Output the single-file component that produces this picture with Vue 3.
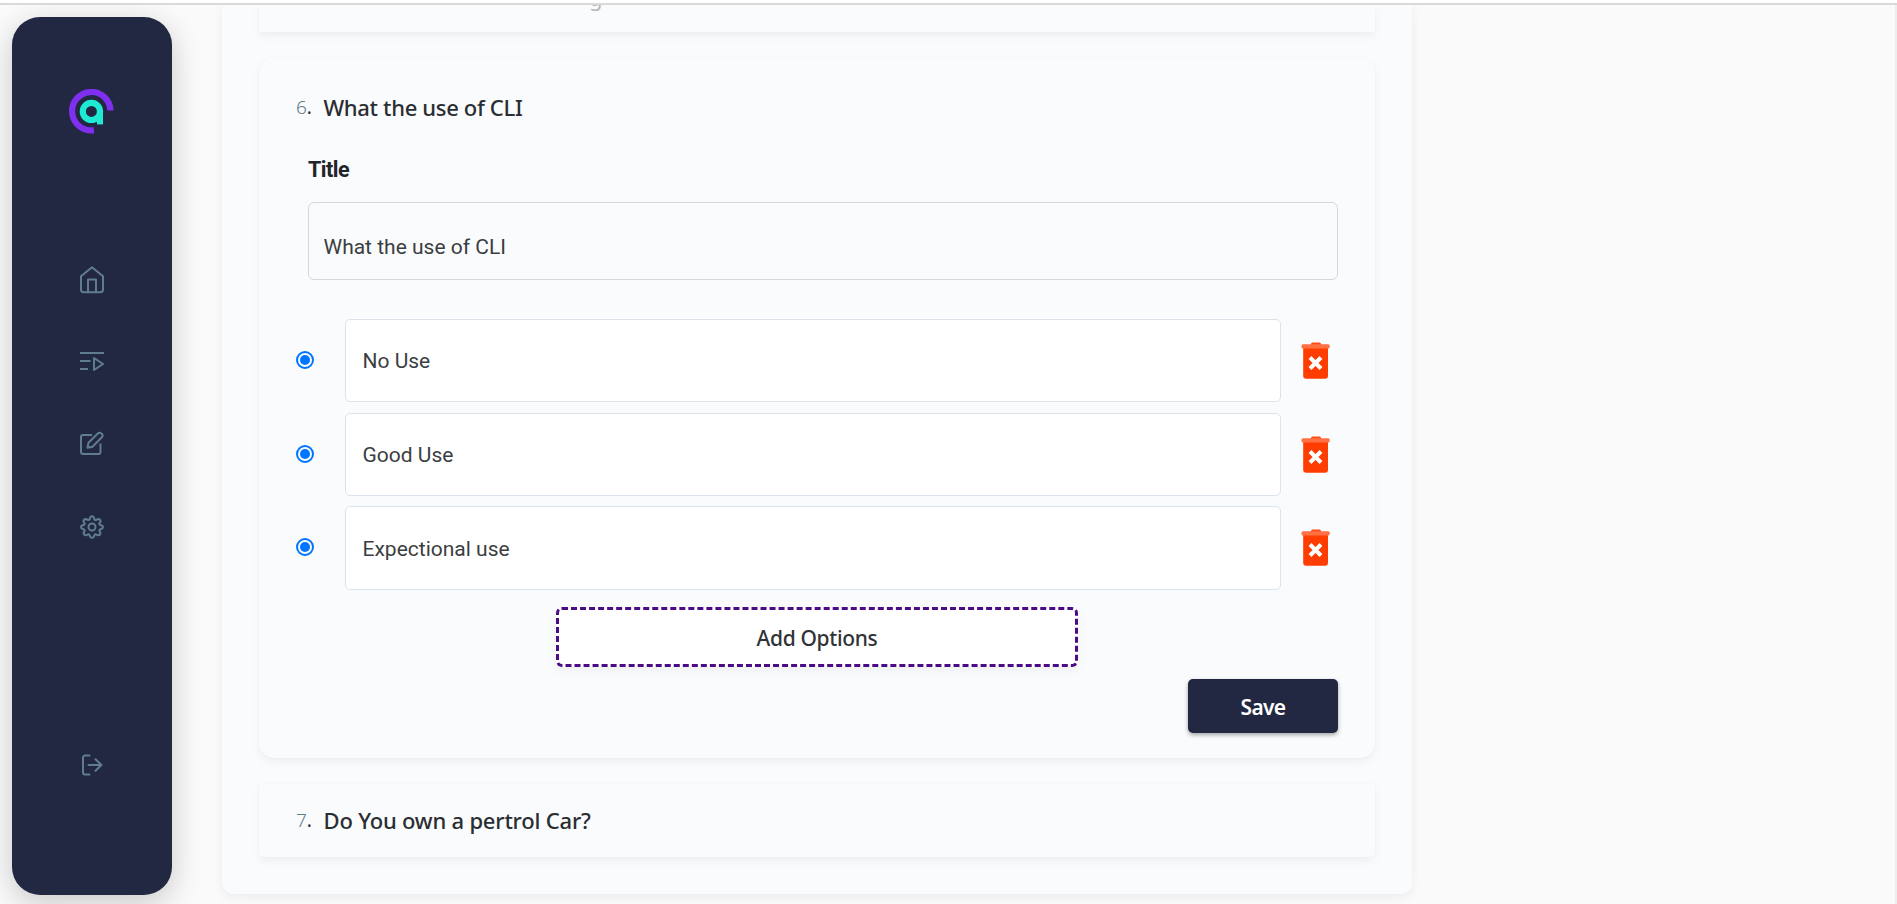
<script setup>
import { ref } from 'vue'

const title = ref('What the use of CLI')
const options = ref(['No Use', 'Good Use', 'Expectional use'])
</script>

<template>
  <div class="topline"></div>
  <div class="page">
    <aside class="sidebar">
      <svg class="logo" width="46" height="46" viewBox="0 0 46 46" fill="none">
        <path d="M25 41.2 A19.2 19.2 0 1 1 41.5 21.500" stroke="#7f2fee" stroke-width="6.2" />
        <circle cx="22.4" cy="22.4" r="8.6" stroke="#1fead4" stroke-width="6.2" />
        <path d="M31 22v13.4" stroke="#1fead4" stroke-width="6" />
      </svg>
      <nav class="nav">
        <svg width="24" height="28" viewBox="0 0 24 28">
          <path d="M1 10.2 12 1.2l11 9v13.6a2.4 2.4 0 0 1-2.4 2.4H3.4A2.4 2.4 0 0 1 1 23.800Z" />
          <path d="M8 26V13.600h8V26" />
        </svg>
        <svg width="24" height="28" viewBox="0 0 24 28">
          <path d="M0 5h24M0 13h10.500M0 21h8" /><path d="M14 10v12l9-6Z" />
        </svg>
        <svg width="24" height="28" viewBox="0 1 24 28">
          <path d="M12 5H3a2 2 0 0 0-2 2v15a2 2 0 0 0 2 2h15.500a2 2 0 0 0 2-2v-8.500" />
          <path d="m7.500 17.800 1-5L17.800 3.500a2.500 2.500 0 0 1 3.600 0l.4.300a2.500 2.500 0 0 1 0 3.500L12.500 16.700Z" />
        </svg>
        <svg width="24" height="28" viewBox="0 -2 24 28">
          <circle cx="12" cy="12" r="3.500" />
          <path d="M10.300 2.200Q12 .2 13.700 2.200L14.500 4.600Q15.200 5.100 16 5L18.200 3.900Q20.600 4 20.600 6.400L19.300 8.600Q19.200 9.400 19.900 9.800L22 10.600Q24 12 22 13.600L19.900 14.500Q19.200 15 19.400 15.700L20.400 18Q20.300 20.300 18 20.300L15.700 19.300Q14.900 19.200 14.500 19.900L13.700 21.800Q12 23.800 10.300 21.800L9.500 19.800Q9 19.200 8.300 19.300L6 20.300Q3.700 20.200 3.600 18L4.700 15.700Q4.800 15 4.100 14.500L2 13.600Q0 12 2 10.500L4.200 9.700Q4.800 9.300 4.700 8.500L3.500 6.400Q3.500 4 5.900 3.900L8.100 5Q8.900 5.100 9.500 4.600Z" />
        </svg>
      </nav>
      <svg class="logout" width="22" height="22" viewBox="0 0 22 22">
        <path d="M8.500 1.500H4a2 2 0 0 0-2 2v15a2 2 0 0 0 2 2h4.500M7.500 11h13M14.500 5.300l6 5.700-6 5.700" />
      </svg>
    </aside>

    <main class="panel">
      <section class="card previous"><span class="clipped">g</span></section>

      <section class="card active">
        <h2 class="question"><span class="num"><i>6</i>.</span><span class="q6">What the use of CLI</span></h2>
        <label class="label" for="title">Title</label>
        <input id="title" v-model="title" class="title-input" />
        <div class="options">
          <div v-for="(option, i) in options" :key="i" class="option">
            <span class="radio"><b></b></span>
            <input v-model="options[i]" class="option-input" />
            <svg class="trash" width="30" height="38" viewBox="0 0 30 38">
              <rect x="10" y="0.500" width="10" height="5" rx="1.500" fill="#ff4a12" />
              <path d="M2.200 4h24.800v29.700a3 3 0 0 1-3 3H5.200a3 3 0 0 1-3-3Z" fill="#ff3d00" />
              <rect x="0.500" y="2.200" width="28.200" height="4.300" rx="1.500" fill="#ff7043" />
              <path d="m9 15.500 11 11M20 15.500 9 26.500" stroke="#fff" stroke-width="4" />
            </svg>
          </div>
        </div>
        <button class="add"><span>Add Options</span></button>
        <button class="save"><span>Save</span></button>
      </section>

      <section class="card next">
        <h2 class="question"><span class="num"><i>7</i>.</span><span class="q7">Do You own a pertrol Car?</span></h2>
      </section>
    </main>
  </div>
</template>

<style>
body { margin: 0; overflow: hidden; }
</style>

<style scoped>
* { box-sizing: border-box; }
.topline { height: 5px; background: #fff; border-bottom: 2px solid #d9d9d9; }
.page {
  height: 899px;
  display: flex;
  align-items: flex-start;
  overflow: hidden;
  background: #fafafa;
  box-shadow: inset -2px 0 #eee;
}
.sidebar {
  width: 160px;
  height: 878px;
  margin: 12px 50px 0 12px;
  flex: none;
  display: flex;
  flex-direction: column;
  align-items: center;
  border-radius: 28px;
  background: #222742;
  box-shadow: 0 8px 30px rgba(0, 0, 0, .2);
}
.logo { margin-top: 72px; flex: none; }
.nav { margin-top: 131px; display: flex; flex-direction: column; gap: 54.300px; }
.nav svg, .logout { fill: none; stroke: #607d8b; stroke-width: 2; stroke-linejoin: round; }
.logout { margin-top: 213px; stroke-linecap: round; }
.panel {
  width: 1190px;
  height: 889px;
  padding: 0 37px;
  flex: none;
  display: flex;
  flex-direction: column;
  border-radius: 0 0 12px 12px;
  background: #fafbfd;
  box-shadow: 0 3px 12px rgba(0, 0, 0, .06);
}
.card {
  width: 1116px;
  flex: none;
  background: #fafbfd;
  box-shadow: 0 4px 10px rgba(0, 0, 0, .05), 0 0 2px rgba(0, 0, 0, .03);
}
.previous {
  height: 27px;
  margin-bottom: 26px;
  padding-left: 330px;
  display: flex;
  font: 22px/22px "Noto Sans", sans-serif;
  color: #b4b7ba;
  clip-path: inset(0 -15px -15px);
}
.clipped { margin-top: -19px; }
.active {
  height: 700px;
  margin-bottom: 26px;
  padding: 32px 37px 0;
  border-radius: 15px;
  display: flex;
  flex-direction: column;
}
.question {
  margin: 0;
  display: flex;
  align-items: center;
  height: 34px;
  font: 500 22px/34px "Noto Sans", "Open Sans", sans-serif;
  color: #2a2d31;
  white-space: nowrap;
}
.num { width: 27.500px; font-size: 19px; font-weight: 400; }
.num i { font-style: normal; font-weight: 300; color: #607d8b; }
.q6 { letter-spacing: -.33px; }
.q7 { letter-spacing: -.2px; }
.label {
  margin: 31px 0 0 12px;
  height: 30px;
  font: 700 21.500px/30px Roboto, sans-serif;
  letter-spacing: -.5px;
  color: #212529;
}
.title-input {
  margin: 17px 0 0 12px;
  width: 1030px;
  height: 78px;
  padding: 12px 15px 0 14.500px;
  border: 1px solid #d5d8dc;
  border-radius: 6px;
  background: transparent;
  font: 400 21px Roboto, sans-serif;
  color: #3b3e41;
  outline: 0;
}
.options { margin-top: 39px; display: flex; flex-direction: column; gap: 10.300px; }
.option { display: flex; align-items: center; height: 83.400px; }
.radio {
  width: 18px;
  height: 18px;
  margin: 0 31px 1.500px 0;
  padding: 2px;
  border: 2px solid #0075ff;
  border-radius: 50%;
}
.radio b { display: block; width: 10px; height: 10px; border-radius: 50%; background: #0075ff; }
.option-input {
  width: 936px;
  height: 83.400px;
  padding: 1px 16px 0 16.500px;
  border: 1px solid #dce3ea;
  border-radius: 5px;
  background: #fff;
  font: 400 21px Roboto, sans-serif;
  color: #3b3e41;
  outline: 0;
}
.trash { margin: .5px 0 0 20px; }
button { padding: 2px 0 0; cursor: pointer; font: 500 21px "Noto Sans", sans-serif; }
.add {
  margin: 17px 0 0 260px;
  width: 522px;
  height: 60px;
  flex: none;
  border: 3px dashed #4b0a86;
  border-radius: 6px;
  background: #fff;
  color: #303337;
  letter-spacing: -.35px;
  box-shadow: 0 4px 10px rgba(0, 0, 0, .05);
}
.save {
  margin: 12px 0 0 892px;
  width: 150px;
  height: 54px;
  flex: none;
  border: 0;
  border-radius: 5px;
  background: #222742;
  color: #fff;
  font-weight: 600;
  letter-spacing: -.7px;
  box-shadow: 0 2px 4px rgba(0, 0, 0, .35);
}
.next { height: 73px; padding: 19px 37px; border-radius: 0 0 5px 5px; }
</style>
